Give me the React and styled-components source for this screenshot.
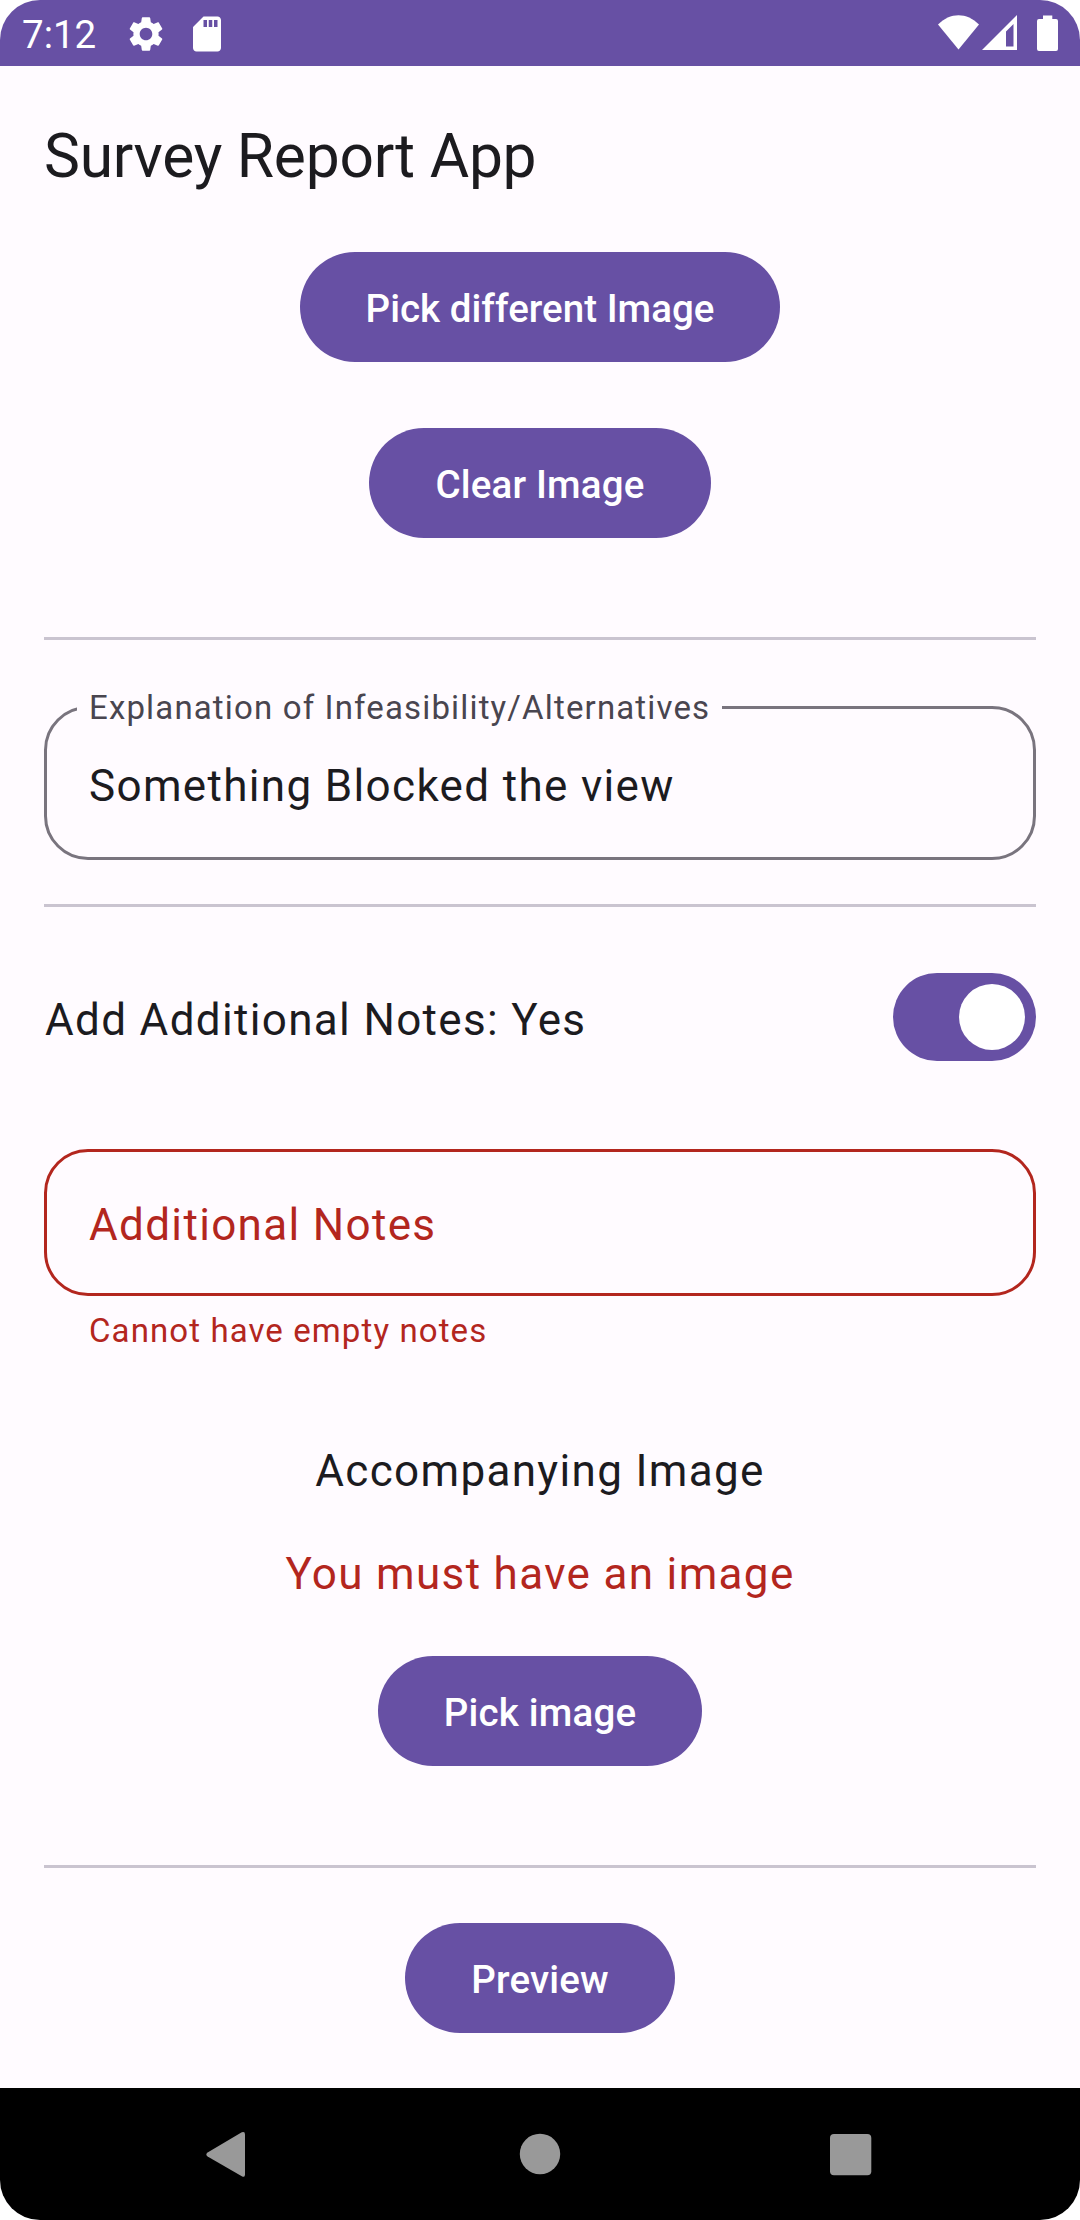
import React, { useState } from "react";
import styled, { createGlobalStyle } from "styled-components";

const color = {
  primary: "#6750a4",
  background: "#fffbff",
  text: "#1c1b1f",
  label: "#49454f",
  outline: "#79747e",
  divider: "#cac4d0",
  error: "#b3261e",
  nav: "#999999",
};

const GlobalStyle = createGlobalStyle`
  * { box-sizing: border-box; }
  body { margin: 0; background: #ffffff; }
`;

const Screen = styled.div`
  display: flex;
  flex-direction: column;
  width: 1080px;
  height: 2220px;
  overflow: hidden;
  border-radius: 40px;
  background: ${color.background};
  color: ${color.text};
  font-family: Roboto, "Liberation Sans", sans-serif;
`;

const StatusBar = styled.header`
  display: flex;
  justify-content: space-between;
  height: 66px;
  background: ${color.primary};
  color: #ffffff;
`;

const StatusGroup = styled.div`
  display: flex;
  align-items: flex-start;
`;

const Clock = styled.time`
  width: 103px;
  margin: 7px 0 0 22px;
  font-size: 38.5px;
  line-height: 55px;
`;

const StatusIcon = styled.svg`
  display: block;
  width: ${(p) => p.$size}px;
  height: ${(p) => p.$size}px;
  margin: 12.5px ${(p) => p.$end || 0}px 0 0;
  fill: currentColor;
`;

const StatusSignals = styled.svg`
  display: block;
  width: 142px;
  height: 66px;
  fill: currentColor;
`;

const TopBar = styled.div`
  height: 176px;
  padding: 52px 44px 0;
`;

const Title = styled.h1`
  margin: 0;
  font-size: 60.5px;
  font-weight: 400;
  letter-spacing: -0.25px;
  line-height: 77px;
`;

const Form = styled.main`
  display: flex;
  flex: 1;
  flex-direction: column;
  padding: 10px 44px 0;
`;

const Actions = styled.div`
  display: flex;
  flex-direction: column;
  align-items: center;
  gap: 66px;
`;

const FilledButton = styled.button`
  height: 110px;
  padding: 29px 66px 26px;
  border: 0;
  border-radius: 55px;
  background: ${color.primary};
  color: #ffffff;
  font-family: inherit;
  font-size: 38.5px;
  font-weight: 500;
  letter-spacing: ${(p) => (p.$tight ? "0.03px" : "0.18px")};
  line-height: 55px;
  white-space: nowrap;
`;

const Divider = styled.hr`
  flex: none;
  width: 100%;
  height: 3px;
  margin: ${(p) => p.$top}px 0 ${(p) => p.$bottom}px;
  border: 0;
  background: ${color.divider};
`;

const Field = styled.div`
  position: relative;
  height: ${(p) => p.$height}px;
  padding: ${(p) => p.$top}px 42px 0;
  border: 3px solid ${(p) => (p.$error ? color.error : color.outline)};
  border-radius: 44px;
  color: ${(p) => (p.$error ? color.error : color.text)};
`;

const FloatingLabel = styled.span`
  position: absolute;
  top: -23.5px;
  left: 30px;
  padding: 0 12px;
  background: ${color.background};
  color: ${color.label};
  font-size: 33px;
  letter-spacing: 1.15px;
  line-height: 44px;
  white-space: nowrap;
`;

const BodyText = styled.p`
  margin: 0;
  color: ${(p) => (p.$error ? color.error : "inherit")};
  font-size: 44px;
  letter-spacing: 1.34px;
  line-height: 66px;
  white-space: nowrap;
`;

const SupportingText = styled.p`
  margin: 12.5px 0 0;
  padding-left: 45px;
  color: ${color.error};
  font-size: 33px;
  letter-spacing: 1.1px;
  line-height: 44px;
`;

const SwitchRow = styled.div`
  display: flex;
  align-items: center;
  justify-content: space-between;
  height: 88px;
  margin-bottom: 88px;

  ${BodyText} {
    padding: 6px 0 0 1px;
  }
`;

const Switch = styled.button`
  display: flex;
  align-items: center;
  justify-content: ${(p) => (p.$on ? "flex-end" : "flex-start")};
  width: 143px;
  height: 88px;
  padding: 11px;
  border: 0;
  border-radius: 44px;
  background: ${(p) => (p.$on ? color.primary : color.outline)};
`;

const Thumb = styled.span`
  width: 66px;
  height: 66px;
  border-radius: 50%;
  background: #ffffff;
`;

const ImageSection = styled.section`
  display: flex;
  flex-direction: column;
  align-items: center;
  gap: 37px;
  margin-top: 85px;

  ${FilledButton} {
    margin-top: 12px;
  }
`;

const NavBar = styled.nav`
  display: flex;
  align-items: center;
  justify-content: space-between;
  height: 132px;
  padding: 0 197px;
  background: #000000;
`;

const NavIcon = styled.svg`
  display: block;
  width: 66px;
  height: 66px;
  fill: ${color.nav};
`;

export default function App() {
  const [notes, setNotes] = useState(true);

  return (
    <>
      <GlobalStyle />
      <Screen>
        <StatusBar>
          <StatusGroup>
            <Clock>7:12</Clock>
            <StatusIcon viewBox="0 0 24 24" $size={42} $end={19}>
              <path d="M19.14 12.94c.04-.3.06-.61.06-.94 0-.32-.02-.64-.07-.94l2.03-1.58c.18-.14.23-.41.12-.61l-1.92-3.32c-.12-.22-.37-.29-.59-.22l-2.39.96c-.5-.38-1.03-.7-1.62-.94l-.36-2.54c-.04-.24-.24-.41-.48-.41h-3.84c-.24 0-.43.17-.47.41l-.36 2.54c-.59.24-1.13.57-1.62.94l-2.39-.96c-.22-.08-.47 0-.59.22L2.74 8.87c-.12.21-.08.47.12.61l2.03 1.58c-.05.3-.09.63-.09.94s.02.64.07.94l-2.03 1.58c-.18.14-.23.41-.12.61l1.92 3.32c.12.22.37.29.59.22l2.39-.96c.5.38 1.03.7 1.62.94l.36 2.54c.05.24.24.41.48.41h3.84c.24 0 .44-.17.47-.41l.36-2.54c.59-.24 1.13-.56 1.62-.94l2.39.96c.22.08.47 0 .59-.22l1.92-3.32c.12-.22.07-.47-.12-.61l-2.01-1.58zM12 15.6c-1.98 0-3.6-1.62-3.6-3.6s1.62-3.6 3.6-3.6 3.6 1.62 3.6 3.6-1.62 3.6-3.6 3.6z" />
            </StatusIcon>
            <StatusIcon viewBox="0 0 24 24" $size={42}>
              <path d="M18 2h-8L4.02 8 4 20c0 1.1.9 2 2 2h12c1.1 0 2-.9 2-2V4c0-1.1-.9-2-2-2zm-6 6h-2V4h2v4zm3 0h-2V4h2v4zm3 0h-2V4h2v4z" />
            </StatusIcon>
          </StatusGroup>
          <StatusSignals viewBox="938 0 142 66">
            <path d="M958.5 49.5 938 24.5C950 12 967 12 979 24.5Z" />
            <path
              fillRule="evenodd"
              d="M982 50 1017 15V50ZM1006 46.5H1013.5V24L1006 31.5Z"
            />
            <path d="M1043 15.5h9.3V19H1056q2 0 2 2V49q0 2-2 2H1039q-2 0-2-2V21q0-2 2-2h4Z" />
          </StatusSignals>
        </StatusBar>

        <TopBar>
          <Title>Survey Report App</Title>
        </TopBar>

        <Form>
          <Actions>
            <FilledButton $tight>Pick different Image</FilledButton>
            <FilledButton>Clear Image</FilledButton>
          </Actions>

          <Divider $top={99} $bottom={66} />

          <Field $height={154} $top={44}>
            <FloatingLabel>Explanation of Infeasibility/Alternatives</FloatingLabel>
            <BodyText>Something Blocked the view</BodyText>
          </Field>

          <Divider $top={44} $bottom={66} />

          <SwitchRow>
            <BodyText>Add Additional Notes: {notes ? "Yes" : "No"}</BodyText>
            <Switch
              role="switch"
              aria-checked={notes}
              $on={notes}
              onClick={() => setNotes(!notes)}
            >
              <Thumb />
            </Switch>
          </SwitchRow>

          <Field $height={147} $top={40} $error>
            <BodyText>Additional Notes</BodyText>
          </Field>
          <SupportingText>Cannot have empty notes</SupportingText>

          <ImageSection>
            <BodyText>Accompanying Image</BodyText>
            <BodyText $error>You must have an image</BodyText>
            <FilledButton>Pick image</FilledButton>
          </ImageSection>

          <Divider $top={99} $bottom={55} />

          <Actions>
            <FilledButton>Preview</FilledButton>
          </Actions>
        </Form>

        <NavBar>
          <NavIcon viewBox="0 0 66 66">
            <path d="M10.6 31.4 44.8 11.3Q48 10 48 13.4V53.6Q48 57 44.8 55.2L10.6 35.5Q8 33.5 10.6 31.4Z" />
          </NavIcon>
          <NavIcon viewBox="0 0 66 66">
            <circle cx="33" cy="33" r="20.2" />
          </NavIcon>
          <NavIcon viewBox="0 0 66 66">
            <rect x="13" y="13" width="41.3" height="41.3" rx="4" />
          </NavIcon>
        </NavBar>
      </Screen>
    </>
  );
}
